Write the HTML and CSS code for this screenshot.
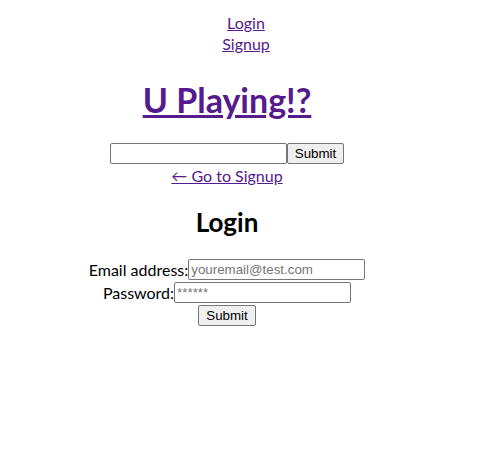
FILE: index.html
```html
<!DOCTYPE html>
<html>
<head>
<meta charset="utf-8">
<link rel="stylesheet" href="styles.css">
</head>
<body>
<nav class="nav">
  <a href="#login">Login</a><br>
  <a href="#signup">Signup</a>
</nav>
<main class="main">
  <h1 class="title"><a href="#home">U Playing!?</a></h1>
  <form class="row"><input type="text" class="field"><button type="button" class="btn">Submit</button></form>
  <div class="go-line"><a href="#signup">← Go to Signup</a></div>
  <h2 class="heading">Login</h2>
  <form class="login">
    <label class="row">Email address:<input type="email" class="field" placeholder="youremail@test.com"></label>
    <label class="row">Password:<input type="password" class="field" placeholder="******"></label>
    <div class="row"><button type="button" class="btn">Submit</button></div>
  </form>
</main>
</body>
</html>
```
FILE: styles.css
```css
body {
  margin: 8px;
  font-family: Lato, "Noto Sans", sans-serif;
  font-size: 16px;
  line-height: 21px;
  text-align: center;
  color: #000;
  background: #fff;
}
a { color: #551a8b; }
.nav { padding-top: 4px; line-height: 21px; }
.main { margin-right: 38px; }
.title {
  font-size: 34px;
  line-height: 42px;
  margin: 25px 0 21px;
  font-weight: bold;
}
.row {
  display: flex;
  justify-content: center;
  align-items: center;
  height: 23px;
  margin: 0;
}
.go-line { line-height: 21px; }
.heading {
  font-size: 26px;
  line-height: 32px;
  margin: 20px 0;
  font-weight: bold;
}
.login { margin: 0; }
.field {
  box-sizing: border-box;
  width: 177px;
  height: 21px;
  padding: 1px 2px;
  border: 1px solid #767676;
  border-radius: 2px;
  font-family: "Liberation Sans", Arial, sans-serif;
  font-size: 13.33px;
  margin: 0;
}
.field::placeholder { color: #757575; }
.btn {
  box-sizing: border-box;
  height: 21px;
  padding: 1px 7px;
  border: 1px solid #767676;
  border-radius: 2px;
  background: #efefef;
  font-family: "Liberation Sans", Arial, sans-serif;
  font-size: 13.33px;
  color: #000;
  margin: 0;
}
```
